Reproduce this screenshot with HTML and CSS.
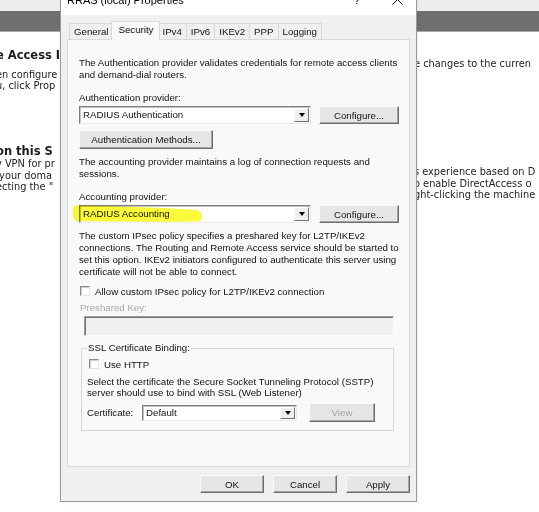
FILE: index.html
```html
<!DOCTYPE html>
<html>
<head>
<meta charset="utf-8">
<title>RRAS (local) Properties</title>
<link rel="stylesheet" href="styles.css">
</head>
<body>
<div class="desk">
  <div class="strip"></div>
  <div class="bar"></div>
  <div class="page">
    <div class="col-left">
      <h2 class="bg-h h-first">e Access I</h2>
      <p class="bg-p p-first">en configure<br>u, click Prop</p>
      <h2 class="bg-h h-second">on this S</h2>
      <p class="bg-p p-second">v VPN for pr<br>&nbsp;your doma<br>ecting the "</p>
    </div>
    <div class="gap"></div>
    <div class="col-right">
      <p class="bg-p r-first">e changes to the curren</p>
      <p class="bg-p r-second">s experience based on D<br>o enable DirectAccess o<br>ght-clicking the machine</p>
    </div>
  </div>
</div>

<div class="dialog">
  <div class="titlebar">
    <span class="title">RRAS (local) Properties</span>
    <span class="help">?</span>
    <span class="close"><svg width="11" height="11" viewBox="0 0 11 11"><path d="M0.5 0.5 L10.5 10.5 M10.5 0.5 L0.5 10.5" stroke="#111" stroke-width="1" fill="none"/></svg></span>
  </div>
  <div class="dbody">
    <div class="tabs">
      <div class="tab">General</div>
      <div class="tab active">Security</div>
      <div class="tab">IPv4</div>
      <div class="tab">IPv6</div>
      <div class="tab">IKEv2</div>
      <div class="tab">PPP</div>
      <div class="tab">Logging</div>
    </div>
    <div class="panel">
      <p class="txt">The Authentication provider validates credentials for remote access clients<br>and demand-dial routers.</p>
      <div class="lbl">Authentication provider:</div>
      <div class="row">
        <div class="combo"><span class="val">RADIUS Authentication</span><span class="arrow"><i></i></span></div>
        <button class="btn cfg">Configure...</button>
      </div>
      <button class="btn methods">Authentication Methods...</button>
      <p class="txt t-acc">The accounting provider maintains a log of connection requests and<br>sessions.</p>
      <div class="lbl">Accounting provider:</div>
      <div class="row">
        <div class="combo"><span class="val">RADIUS Accounting</span><span class="arrow"><i></i></span></div>
        <button class="btn cfg">Configure...</button>
      </div>
      <p class="txt t-ipsec">The custom IPsec policy specifies a preshared key for L2TP/IKEv2<br>connections. The Routing and Remote Access service should be started to<br>set this option. IKEv2 initiators configured to authenticate this server using<br>certificate will not be able to connect.</p>
      <div class="check c-ipsec"><span class="box"></span><span>Allow custom IPsec policy for L2TP/IKEv2 connection</span></div>
      <div class="lbl disabled l-key">Preshared Key:</div>
      <div class="field"></div>
      <fieldset class="group">
        <legend>SSL Certificate Binding:</legend>
        <div class="check c-http"><span class="box"></span><span>Use HTTP</span></div>
        <p class="txt t-sel">Select the certificate the Secure Socket Tunneling Protocol (SSTP)<br>server should use to bind with SSL (Web Listener)</p>
        <div class="certrow">
          <span class="certlbl">Certificate:</span>
          <div class="combo small"><span class="val">Default</span><span class="arrow"><i></i></span></div>
          <button class="btn view">View</button>
        </div>
      </fieldset>
    </div>
    <div class="actions">
      <button class="btn act">OK</button>
      <button class="btn act">Cancel</button>
      <button class="btn act">Apply</button>
    </div>
  </div>
</div>

<svg class="marker" width="539" height="512" viewBox="0 0 539 512">
  <path d="M75 205.5 C110 206 160 207.5 196 210 C203 211 204 219 199 221.5 C160 222 110 221.5 76 221 C72 217 72 209 75 205.5 Z" fill="#fbfb3c"/>
</svg>
</body>
</html>
```
FILE: styles.css
```css
* { box-sizing: border-box; }
html, body { margin: 0; padding: 0; }
body {
  width: 539px;
  height: 512px;
  overflow: hidden;
  background: #fff;
  position: relative;
  font-family: "Liberation Sans", Arial, sans-serif;
}

/* background window */
.desk { height: 512px; }
.strip { height: 11px; background: #eeeeee; }
.bar { height: 21px; background: #6f6f6f; border-bottom: 1px solid #a9a9a9; }
.page {
  display: grid;
  grid-template-columns: 60px 1fr 125px;
  font-family: "DejaVu Sans", Verdana, sans-serif;
  font-size: 9.8px;
  color: #1c1c1c;
}
.col-left, .col-right { overflow: hidden; white-space: nowrap; }
.col-left { margin-left: -4px; }
.bg-h { margin: 0; font-size: 11.5px; font-weight: bold; line-height: 14px; }
.bg-p { margin: 0; line-height: 11px; }
.h-first { margin-top: 16px; }
.p-first { margin-top: 7px; }
.h-second { margin-top: 54px; line-height: 13px; }
.p-second { line-height: 11.5px; }
.r-first { margin-top: 25.5px; }
.r-second { margin-top: 97.75px; line-height: 11.5px; }

/* dialog */
.dialog {
  position: absolute;
  left: 60px;
  top: -16px;
  width: 357px;
  height: 518px;
  border: 1px solid #9a9a9a;
  background: #f0f0f0;
  display: flex;
  flex-direction: column;
  font-size: 9.7px;
  color: #111;
  box-shadow: 0 0 4px rgba(0, 0, 0, 0.08);
}
.titlebar {
  height: 30px;
  flex: none;
  background: #fff;
  display: flex;
  align-items: center;
  padding-left: 6px;
}
.title { flex: 1; font-size: 11px; color: #000; }
.help { width: 32px; text-align: center; font-size: 11.5px; color: #111; margin-right: 5px; }
.close { width: 38px; display: flex; justify-content: center; align-items: center; }
.close svg { display: block; margin-top: -2px; }

.dbody {
  flex: 1;
  padding: 6px 6px 7px;
  display: flex;
  flex-direction: column;
}
.tabs {
  height: 18px;
  display: flex;
  align-items: flex-end;
  padding-left: 2px;
}
.tab {
  height: 16px;
  line-height: 15px;
  padding: 0 4px;
  border: 1px solid #d9d9d9;
  border-bottom: none;
  margin-left: -1px;
  background: #f0f0f0;
  white-space: nowrap;
}
.tab:first-child { margin-left: 0; }
.tab.active {
  height: 19px;
  line-height: 16px;
  margin: 0 -2px -1px -2px;
  padding: 0 6px;
  background: #f9f9f9;
  position: relative;
  z-index: 1;
}
.panel {
  height: 428px;
  flex: none;
  border: 1px solid #d9d9d9;
  background: #f9f9f9;
  padding: 17px 0 0 11px;
}
.txt { margin: 0; line-height: 12px; white-space: nowrap; }
.lbl { line-height: 12px; margin-top: 11px; }
.row { display: flex; align-items: center; gap: 8px; margin-top: 2px; height: 18px; }
.combo {
  width: 232px;
  height: 18px;
  display: flex;
  align-items: stretch;
  background: #fff;
  border: 1px solid;
  border-color: #7d7d7d #ececec #ececec #7d7d7d;
  box-shadow: inset 1px 1px 0 #c4c4c4;
}
.combo .val { flex: 1; padding-left: 3px; line-height: 15px; white-space: nowrap; }
.arrow {
  width: 15px;
  margin: 1px 1px 1px 0;
  background: #f0f0f0;
  border: 1px solid;
  border-color: #fff #707070 #707070 #fff;
  display: flex;
  align-items: center;
  justify-content: center;
}
.arrow i {
  display: block;
  width: 0;
  height: 0;
  border-left: 3.5px solid transparent;
  border-right: 3.5px solid transparent;
  border-top: 4px solid #000;
}
.btn {
  font: inherit;
  color: #111;
  height: 18px;
  padding: 0;
  background: #e6e6e6;
  border: 1px solid;
  border-color: #fbfbfb #6d6d6d #6d6d6d #fbfbfb;
  box-shadow: inset -1px -1px 0 #a6a6a6;
}
.cfg { width: 80px; }
.methods { display: block; width: 134px; height: 19px; margin-top: 6px; }
.t-acc { margin-top: 7px; }
.t-ipsec { margin-top: 7px; }
.check { display: flex; align-items: center; gap: 5px; height: 12px; }
.box {
  width: 10px;
  height: 10px;
  background: #fff;
  border: 1px solid;
  border-color: #8a8a8a #e6e6e6 #e6e6e6 #8a8a8a;
  box-shadow: inset 1px 1px 0 #cfcfcf;
}
.c-ipsec { margin-top: 7px; margin-left: 1px; }
.disabled { color: #a8a8a8; }
.l-key { margin-top: 5px; margin-left: 1px; }
.field {
  margin: 2px 0 0 5px;
  width: 310px;
  height: 20px;
  background: #f0f0f0;
  border: 1px solid;
  border-color: #9a9a9a #fdfdfd #fdfdfd #9a9a9a;
  box-shadow: inset 1px 1px 0 #777;
}
.group {
  margin: 6px 0 0 2px;
  width: 313px;
  padding: 0 5px 8px 5px;
  border: 1px solid #d6d6d6;
}
.group legend { padding: 0 1px; line-height: 12px; }
.c-http { margin-top: 4px; margin-left: 2px; }
.t-sel { margin-top: 6px; line-height: 11px; }
.certrow { display: flex; align-items: center; margin-top: 5px; height: 19px; }
.certlbl { width: 55px; }
.combo.small { width: 155px; height: 16px; }
.combo.small .val { line-height: 13px; }
.view { width: 66px; height: 19px; margin-left: 12px; color: #a3a3a3; }

.actions { display: flex; justify-content: flex-end; gap: 9px; margin-top: 8px; }
.act { width: 64px; height: 18px; }

.marker {
  position: absolute;
  left: 0;
  top: 0;
  pointer-events: none;
  mix-blend-mode: multiply;
}
```
